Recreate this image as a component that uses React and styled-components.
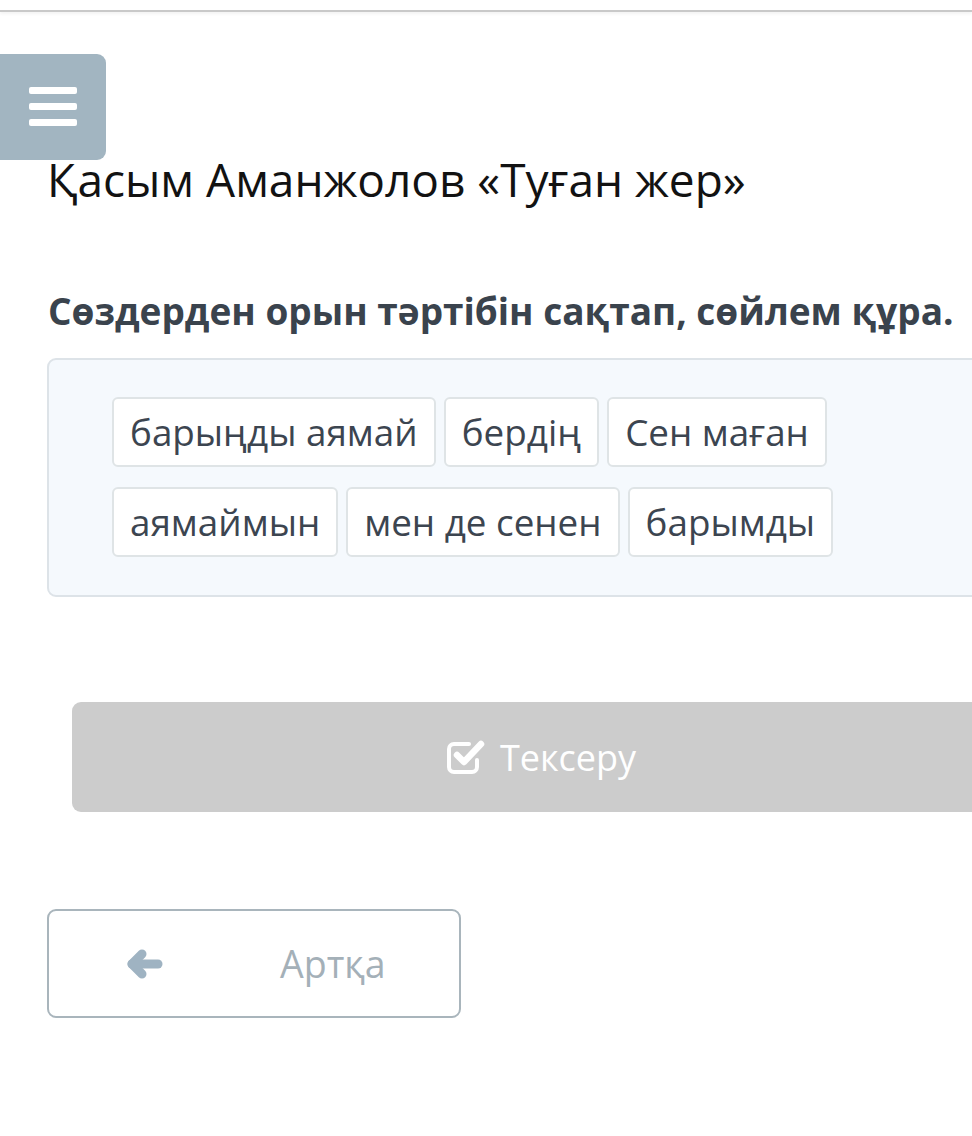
import styled, { createGlobalStyle } from "styled-components";

const GlobalStyle = createGlobalStyle`
  html, body {
    margin: 0;
    padding: 0;
    background: #ffffff;
    overflow-x: hidden;
  }
  body {
    font-family: "Open Sans", "Noto Sans", sans-serif;
  }
`;

const Page = styled.div`
  width: 972px;
  min-height: 1136px;
  overflow: hidden;
`;

const TopBar = styled.div`
  height: 10px;
  border-bottom: 2px solid #c9c9c9;
  box-shadow: 0 2px 3px rgba(0, 0, 0, 0.05);
`;

const MenuButton = styled.button`
  display: flex;
  align-items: center;
  justify-content: center;
  width: 106px;
  height: 106px;
  margin-top: 42px;
  padding: 0;
  border: none;
  border-radius: 0 9px 9px 0;
  background: #a2b5c1;
  cursor: pointer;
`;

const Main = styled.main`
  width: 988px;
  padding-left: 47px;
`;

const Title = styled.h1`
  margin: 0;
  font-size: 46px;
  line-height: 38px;
  font-weight: 400;
  color: #121212;
`;

const Task = styled.h2`
  margin: 91px 0 0 1px;
  font-size: 37px;
  line-height: 44px;
  font-weight: 700;
  color: #3a434d;
`;

const WordPanel = styled.div`
  display: flex;
  flex-wrap: wrap;
  align-content: flex-start;
  gap: 20px 8px;
  margin-top: 25px;
  padding: 37px 63px 38px 63px;
  background: #f5f9fd;
  border: 2px solid #dde3e8;
  border-radius: 9px;
`;

const Word = styled.div`
  padding: 9px 16px;
  font-size: 36.8px;
  line-height: 48px;
  color: #3c4550;
  background: #ffffff;
  border: 2px solid #dfe4e6;
  border-radius: 6px;
  white-space: nowrap;
  cursor: grab;
`;

const CheckButton = styled.button`
  display: flex;
  align-items: center;
  justify-content: center;
  gap: 14px;
  width: calc(100% - 50px);
  height: 110px;
  margin: 105px 25px 0;
  border: none;
  border-radius: 9px;
  background: #cccccc;
  color: #ffffff;
  font-family: inherit;
  font-size: 36px;
`;

const BackButton = styled.button`
  display: flex;
  align-items: center;
  width: 414px;
  height: 109px;
  margin-top: 97px;
  padding: 0 0 0 78px;
  border: 2px solid #a9b5bc;
  border-radius: 9px;
  background: #ffffff;
  color: #a4b0b8;
  font-family: inherit;
  font-size: 37.5px;
`;

const BackLabel = styled.span`
  margin-left: 117px;
`;

const CheckIcon = () => (
  <svg width="40" height="38" viewBox="0 0 40 38" fill="none">
    <path
      d="M31 22 V29 a5 5 0 0 1 -5 5 H8 a5 5 0 0 1 -5 -5 V11 a5 5 0 0 1 5 -5 H23"
      stroke="#fff"
      strokeWidth="4"
      strokeLinecap="round"
    />
    <polyline
      points="11,17 18,24 35,6"
      stroke="#fff"
      strokeWidth="6.5"
      strokeLinecap="round"
      strokeLinejoin="round"
    />
  </svg>
);

const ArrowIcon = () => (
  <svg width="36" height="30" viewBox="0 0 36 30" fill="none">
    <polyline
      points="15,5 5,15 15,25"
      stroke="#9fb3c2"
      strokeWidth="9"
      strokeLinecap="round"
      strokeLinejoin="round"
    />
    <line x1="5" y1="15" x2="31" y2="15" stroke="#9fb3c2" strokeWidth="9" strokeLinecap="round" />
  </svg>
);

const words = [
  "барыңды аямай",
  "бердің",
  "Сен маған",
  "аямаймын",
  "мен де сенен",
  "барымды",
];

const App = () => {
  return (
    <Page>
      <GlobalStyle />
      <TopBar />
      <MenuButton aria-label="Menu">
        <svg width="48" height="41" viewBox="0 0 48 41">
          <rect x="0" y="0" width="48" height="7" rx="2" fill="#fff" />
          <rect x="0" y="16" width="48" height="7" rx="2" fill="#fff" />
          <rect x="0" y="32" width="48" height="7" rx="2" fill="#fff" />
        </svg>
      </MenuButton>
      <Main>
        <Title>Қасым Аманжолов «Туған жер»</Title>
        <Task>Сөздерден орын тәртібін сақтап, сөйлем құра.</Task>
        <WordPanel>
          {words.map((w) => (
            <Word key={w}>{w}</Word>
          ))}
        </WordPanel>
        <CheckButton>
          <CheckIcon />
          Тексеру
        </CheckButton>
        <BackButton>
          <ArrowIcon />
          <BackLabel>Артқа</BackLabel>
        </BackButton>
      </Main>
    </Page>
  );
};

export default App;
